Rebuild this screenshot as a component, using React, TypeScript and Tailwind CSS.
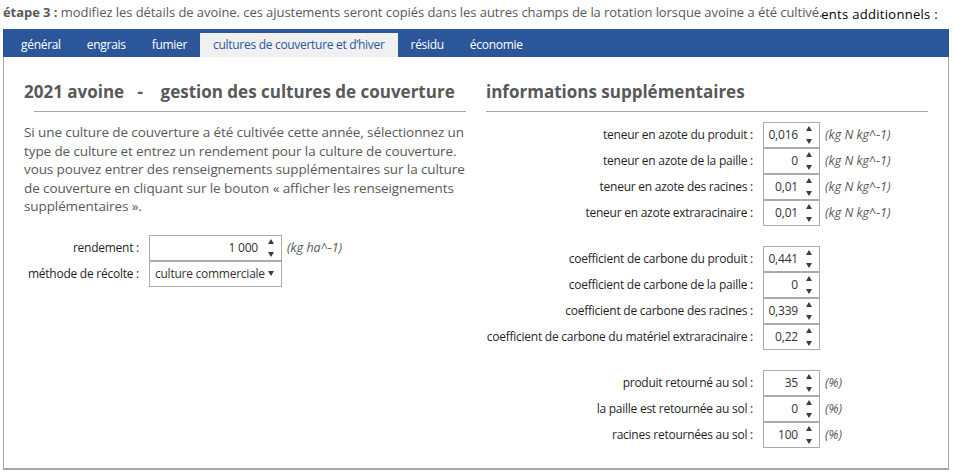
import React from 'react';

const tabs = [
  'général',
  'engrais',
  'fumier',
  'cultures de couverture et d\u2019hiver',
  'résidu',
  'économie',
];
const activeTab = 3;

interface Field {
  label: string;
  value: string;
  unit?: string;
}

const azote: Field[] = [
  { label: 'teneur en azote du produit :', value: '0,016', unit: '(kg N kg^-1)' },
  { label: 'teneur en azote de la paille :', value: '0', unit: '(kg N kg^-1)' },
  { label: 'teneur en azote des racines :', value: '0,01', unit: '(kg N kg^-1)' },
  { label: 'teneur en azote extraracinaire :', value: '0,01', unit: '(kg N kg^-1)' },
];

const carbone: Field[] = [
  { label: 'coefficient de carbone du produit :', value: '0,441' },
  { label: 'coefficient de carbone de la paille :', value: '0' },
  { label: 'coefficient de carbone des racines :', value: '0,339' },
  { label: 'coefficient de carbone du matériel extraracinaire :', value: '0,22' },
];

const retour: Field[] = [
  { label: 'produit retourné au sol :', value: '35', unit: '(%)' },
  { label: 'la paille est retournée au sol :', value: '0', unit: '(%)' },
  { label: 'racines retournées au sol :', value: '100', unit: '(%)' },
];

const intro = [
  'Si une culture de couverture a été cultivée cette année, sélectionnez un',
  'type de culture et entrez un rendement pour la culture de couverture.',
  'vous pouvez entrer des renseignements supplémentaires sur la culture',
  'de couverture en cliquant sur le bouton « afficher les renseignements',
  'supplémentaires ».',
];

function Spinner() {
  return (
    <>
      <svg className="absolute right-[7px] top-[3px]" width="6" height="5" viewBox="0 0 6 5">
        <polygon points="0,5 3,0 6,5" fill="#3c3c3c" />
      </svg>
      <svg className="absolute right-[7px] top-[16px]" width="6" height="5" viewBox="0 0 6 5">
        <polygon points="0,0 6,0 3,5" fill="#3c3c3c" />
      </svg>
    </>
  );
}

function NumberBox({ value, className }: { value: string; className: string }) {
  return (
    <div
      className={`relative flex h-[26px] shrink-0 items-center justify-end border border-[#ababab] bg-white text-[12px] tracking-[-0.2px] text-[#333] ${className}`}
    >
      {value}
      <Spinner />
    </div>
  );
}

function InfoGroup({ fields }: { fields: Field[] }) {
  return (
    <div className="flex flex-col">
      {fields.map((f) => (
        <div key={f.label} className="flex items-center whitespace-nowrap">
          <span className="w-[277px] shrink-0 pr-[10px] text-right text-[12px] tracking-[-0.25px] text-[#1f1f1f]">
            {f.label}
          </span>
          <NumberBox value={f.value} className="w-[57px] pr-[21px]" />
          {f.unit && (
            <span className="pl-[5px] text-[12.5px] italic text-[#595959]">{f.unit}</span>
          )}
        </div>
      ))}
    </div>
  );
}

export default function App() {
  return (
    <div className="h-[472px] w-[955px] overflow-hidden bg-white font-['Segoe_UI','Open_Sans',sans-serif] text-[#595959]">
      {/* step header */}
      <div className="relative h-[29px] whitespace-nowrap pl-[3px] pt-[3px] text-[13px] tracking-[-0.06px]">
        <span className="font-bold">étape 3 :</span> modifiez les détails de avoine. ces ajustements
        seront copiés dans les autres champs de la rotation lorsque avoine a été cultivé.
        <span className="absolute right-[17px] top-[5px] text-[13px] tracking-[0.3px] text-black">
          ents additionnels :
        </span>
      </div>

      {/* tab bar */}
      <div className="ml-[3px] flex h-[28px] w-[946px] items-end whitespace-nowrap bg-[#2b579a] pl-[5px]">
        {tabs.map((t, i) => (
          <div
            key={t}
            className={
              i === activeTab
                ? 'flex h-[24px] items-center bg-[#f0f0f0] px-[13px] text-[12px] tracking-[-0.3px] text-[#2b579a]'
                : 'flex h-[24px] items-center px-[13px] text-[12px] tracking-[-0.3px] text-white'
            }
          >
            {t}
          </div>
        ))}
      </div>

      {/* panel */}
      <div className="ml-[3px] flex h-[413px] w-[946px] gap-[20px] border-b-2 border-l border-r border-[#a8a8a8] pl-[20px] pr-[19px]">
        {/* left column */}
        <div className="w-[442px] shrink-0">
          <h2 className="whitespace-pre pt-[23px] text-[17px] font-bold leading-[24px] text-[#595959]">
            {'2021 avoine   -    gestion des cultures de couverture'}
          </h2>
          <div className="ml-[10px] mt-[7px] border-t border-[#a8a8a8]" />
          <p className="whitespace-nowrap pt-[11px] text-[13.5px] leading-[18.6px] tracking-[-0.1px] text-[#595959]">
            {intro.map((line) => (
              <span key={line} className="block">
                {line}
              </span>
            ))}
          </p>
          <div className="mt-[19px] flex flex-col whitespace-nowrap">
            <div className="flex items-center">
              <span className="w-[125px] shrink-0 pr-[10px] text-right text-[12px] tracking-[-0.25px] text-[#1f1f1f]">
                rendement :
              </span>
              <NumberBox value="1 000" className="w-[133px] pr-[23px]" />
              <span className="pl-[5px] text-[12.5px] italic text-[#595959]">(kg ha^-1)</span>
            </div>
            <div className="flex items-center">
              <span className="w-[125px] shrink-0 pr-[10px] text-right text-[12px] tracking-[-0.25px] text-[#1f1f1f]">
                méthode de récolte :
              </span>
              <div className="relative flex h-[26px] w-[133px] shrink-0 items-center border border-[#ababab] bg-white pl-[5px] text-[12px] tracking-[-0.25px] text-[#333]">
                culture commerciale
                <svg
                  className="absolute right-[7px] top-[9px]"
                  width="6"
                  height="5"
                  viewBox="0 0 6 5"
                >
                  <polygon points="0,0 6,0 3,5" fill="#3c3c3c" />
                </svg>
              </div>
            </div>
          </div>
        </div>

        {/* right column */}
        <div className="w-[442px] shrink-0">
          <h2 className="pt-[23px] text-[17px] font-bold leading-[24px] text-[#595959]">
            informations supplémentaires
          </h2>
          <div className="mt-[7px] border-t border-[#a8a8a8]" />
          <div className="mt-[10px] flex flex-col gap-[20px]">
            <InfoGroup fields={azote} />
            <InfoGroup fields={carbone} />
            <InfoGroup fields={retour} />
          </div>
        </div>
      </div>
    </div>
  );
}
